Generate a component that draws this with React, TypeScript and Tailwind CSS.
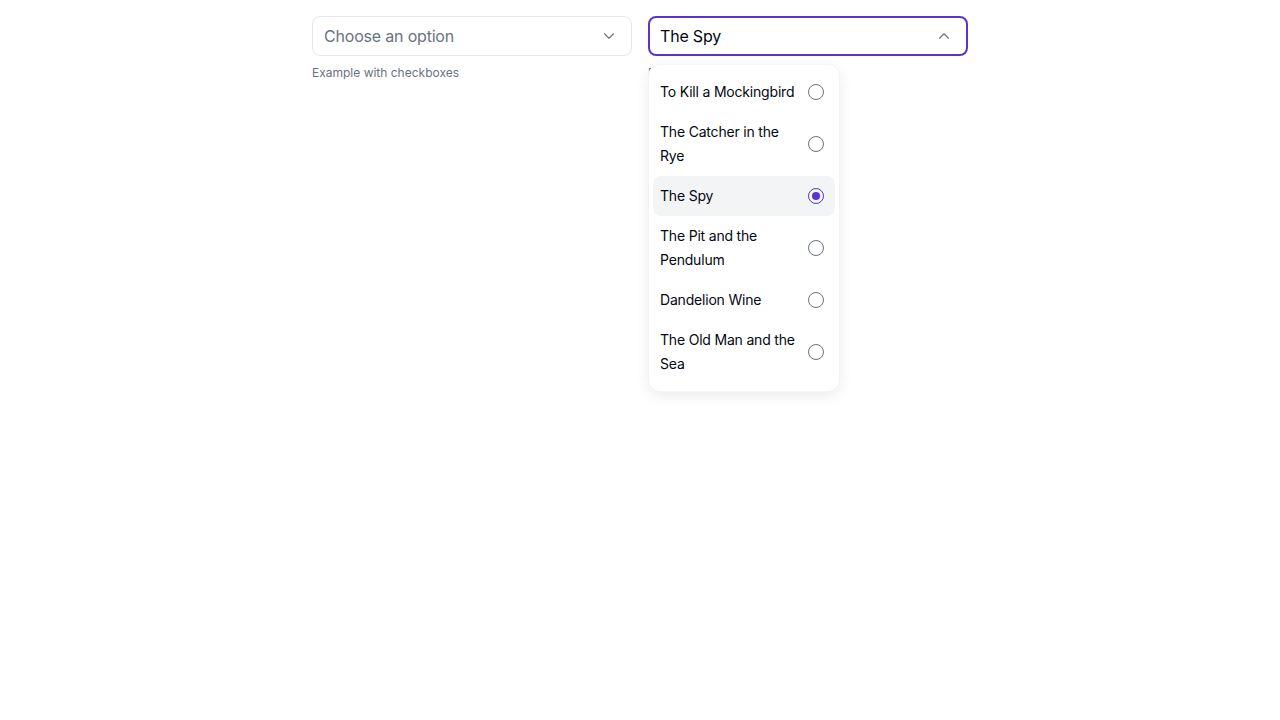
import { ChevronDown, ChevronUp } from "lucide-react";

const books = [
  "To Kill a Mockingbird",
  "The Catcher in the Rye",
  "The Spy",
  "The Pit and the Pendulum",
  "Dandelion Wine",
  "The Old Man and the Sea",
];

export default function App() {
  const selected = "The Spy";

  return (
    <div
      className="min-h-screen bg-white tracking-[-0.012em]"
      style={{ fontFamily: "Inter, 'Noto Sans', sans-serif" }}
    >
      <div className="mx-auto flex w-[656px] gap-4 pt-4">
        {/* Checkbox select */}
        <div className="flex w-[320px] flex-col">
          <button className="flex h-10 items-center justify-between rounded-lg border border-gray-200 bg-white pl-[11px] pr-[13px] text-left">
            <span className="text-base text-gray-500">Choose an option</span>
            <ChevronDown className="h-[18px] w-[18px] text-gray-500" strokeWidth={1.5} />
          </button>
          <p className="mt-[9px] text-xs leading-4 tracking-normal text-gray-500">
            Example with checkboxes
          </p>
        </div>

        {/* Radio select (open) */}
        <div className="relative flex w-[320px] flex-col">
          <button className="flex h-10 items-center justify-between rounded-lg border-2 border-[#5b34d0] bg-white pl-[10px] pr-[13px] text-left">
            <span className="text-base text-gray-950">{selected}</span>
            <ChevronUp className="h-[18px] w-[18px] text-gray-500" strokeWidth={1.5} />
          </button>
          <p className="mt-[9px] text-xs leading-4 tracking-normal text-gray-500">
            Example with radio buttons
          </p>

          <ul className="absolute left-0 top-12 w-48 rounded-xl border border-gray-100 bg-white px-1 py-[7px] shadow-[0_4px_14px_rgba(0,0,0,0.08)]">
            {books.map((book) => {
              const active = book === selected;
              return (
                <li
                  key={book}
                  className={`flex items-center justify-between gap-3 rounded-lg py-2 pl-[7px] pr-[11px] text-sm leading-6 text-gray-950 ${
                    active ? "bg-gray-100" : ""
                  }`}
                >
                  <span>{book}</span>
                  <span
                    className={`flex h-4 w-4 shrink-0 items-center justify-center rounded-full border ${
                      active ? "border-[#5b34d0]" : "border-gray-500"
                    }`}
                  >
                    {active && (
                      <span className="h-2 w-2 rounded-full bg-[#5b34d0]" />
                    )}
                  </span>
                </li>
              );
            })}
          </ul>
        </div>
      </div>
    </div>
  );
}
